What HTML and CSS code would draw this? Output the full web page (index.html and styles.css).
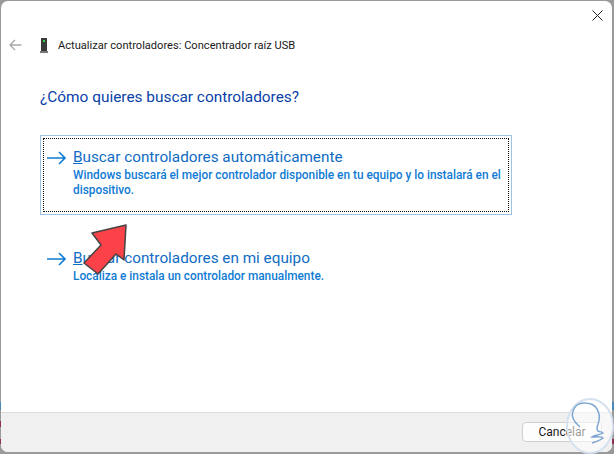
FILE: index.html
```html
<!DOCTYPE html>
<html lang="es">
<head>
    <meta charset="UTF-8">
    <meta name="viewport" content="width=device-width, initial-scale=1.0">
    <title>Actualizar controladores</title>
    <link rel="stylesheet" href="styles.css">
</head>
<body>
    <div class="window">
        <div class="titlebar">
            <svg class="close" width="11" height="11" viewBox="0 0 11 11"><path d="M.5.5l10 10M10.500.5l-10 10" stroke="#222" fill="none"/></svg>
        </div>
        <div class="content">
            <div class="nav">
                <svg class="back" width="13" height="12" viewBox="0 0 13 12"><path d="M12.500 6H1M6 1L1 6l5 5" stroke="#a8a8a8" stroke-width="1.300" fill="none"/></svg>
                <svg class="device" width="8" height="15" viewBox="0 0 8 15"><rect x="1" y="0" width="6" height="13" fill="#3a3a3a"/><rect x="0" y="13" width="8" height="2" fill="#777"/><rect x="3" y="2" width="2" height="2" fill="#2fd04a"/></svg>
                <span class="nav-title">Actualizar controladores: Concentrador raíz USB</span>
            </div>
            <h1 class="heading">¿Cómo quieres buscar controladores?</h1>
            <div class="option option-active">
                <div class="option-inner">
                    <svg class="arrow" width="20" height="14" viewBox="0 0 20 14"><path d="M0 7h18M12 1l6 6-6 6" stroke="#0f7bd4" stroke-width="1.600" fill="none"/></svg>
                    <div>
                        <div class="option-title"><u>B</u>uscar controladores automáticamente</div>
                        <p class="option-desc">Windows buscará el mejor controlador disponible en tu equipo y lo instalará en el dispositivo.</p>
                    </div>
                </div>
            </div>
            <div class="option">
                <div class="option-inner">
                    <svg class="arrow" width="20" height="14" viewBox="0 0 20 14"><path d="M0 7h18M12 1l6 6-6 6" stroke="#0f7bd4" stroke-width="1.600" fill="none"/></svg>
                    <div>
                        <div class="option-title"><u>B</u>uscar controladores en mi equipo</div>
                        <p class="option-desc">Localiza e instala un controlador manualmente.</p>
                    </div>
                </div>
            </div>
        </div>
        <div class="footer">
            <button class="cancel">Cancelar</button>
        </div>
    </div>
    <svg class="red-arrow" width="46" height="52" viewBox="0 0 46 52"><path d="M43 1L9 9l9 12L1 39l14 11 18-20 8 6z" fill="#fb4248" stroke="#444" stroke-width="1.500" stroke-linejoin="round"/></svg>
    <svg class="watermark" width="48" height="56" viewBox="0 0 48 56">
        <ellipse cx="24" cy="28" rx="23" ry="27" fill="#fff" fill-opacity=".55" stroke="#d5e1ef" stroke-width="2"/>
        <path d="M14 29C8 24 5 18 7 13 9 7 13 5 18 5c6 0 11 2 13 6 3 5 3 10 1 15-1 3-2 5 0 7 2 1 5 1 5 2-3 2-9 2-11 4 3 0 10-1 11 1-2 2-8 4-11 5" stroke="#7fa6d2" stroke-width="1.500" fill="none"/>
    </svg>
</body>
</html>
```
FILE: styles.css
```css
*{
    margin: 0;
    padding: 0;
    box-sizing: border-box;
    font-family: 'Roboto', sans-serif;
}
body{
    width: 614px;
    height: 454px;
    position: relative;
    overflow: hidden;
    background: linear-gradient(#9a9a9a 402px, #4a86b8 402px, #4a86b8 410px, #9a9a9a 410px, #9a9a9a 421px, #8a2f55 421px, #8a2f55 427px, #9a9a9a 427px, #9a9a9a 439px, #8a2f55 439px, #8a2f55 444px, #9a9a9a 444px);
    padding: 1px 2px 2px 1px;
}
.window{
    height: 451px;
    background: #fff;
    border-radius: 7px;
    overflow: hidden;
    display: flex;
    flex-direction: column;
}
.titlebar{
    height: 30px;
    display: flex;
    justify-content: flex-end;
    padding: 9px 9px 0 0;
}
.content{
    flex: 1;
    padding: 0 0 0 8px;
}
.nav{
    display: flex;
    align-items: center;
    height: 28px;
}
.back{
    margin-right: 18px;
}
.device{
    margin-right: 10px;
}
.nav-title{
    font-size: 11.100px;
    color: #1a1a1a;
}
.heading{
    font-size: 15.400px;
    font-weight: 400;
    color: #0a3fa8;
    margin: 29px 0 0 31px;
}
.option{
    width: 472px;
    margin: 29px 0 0 31px;
    padding: 2px;
    border: 1px solid transparent;
}
.option + .option{
    margin-top: 21px;
}
.option-active{
    height: 80px;
    border-color: #9cc3e4;
}
.option-inner{
    height: 100%;
    display: flex;
    padding: 8px 3px;
    border: 1px dotted transparent;
}
.option-active .option-inner{
    border-color: #111;
}
.arrow{
    margin: 4px 6px 0 0;
    flex: none;
}
.option-title{
    font-size: 15.300px;
    color: #0f6cc4;
    line-height: 20px;
}
.option-desc{
    font-size: 11.850px;
    font-weight: 500;
    color: #0f7bd4;
    line-height: 15px;
    margin-top: 1px;
}
.footer{
    height: 40px;
    background: #f0f0f0;
    border-top: 1px solid #dcdcdc;
    display: flex;
    justify-content: flex-end;
    padding: 9px 10px 0 0;
}
.cancel{
    width: 80px;
    height: 20px;
    background: #fdfdfd;
    border: 1px solid #d0d0d0;
    border-radius: 4px;
    font-size: 12px;
    color: #1a1a1a;
}
.red-arrow{
    position: absolute;
    left: 83px;
    top: 224px;
}
.watermark{
    position: absolute;
    left: 566px;
    top: 398px;
}
```
